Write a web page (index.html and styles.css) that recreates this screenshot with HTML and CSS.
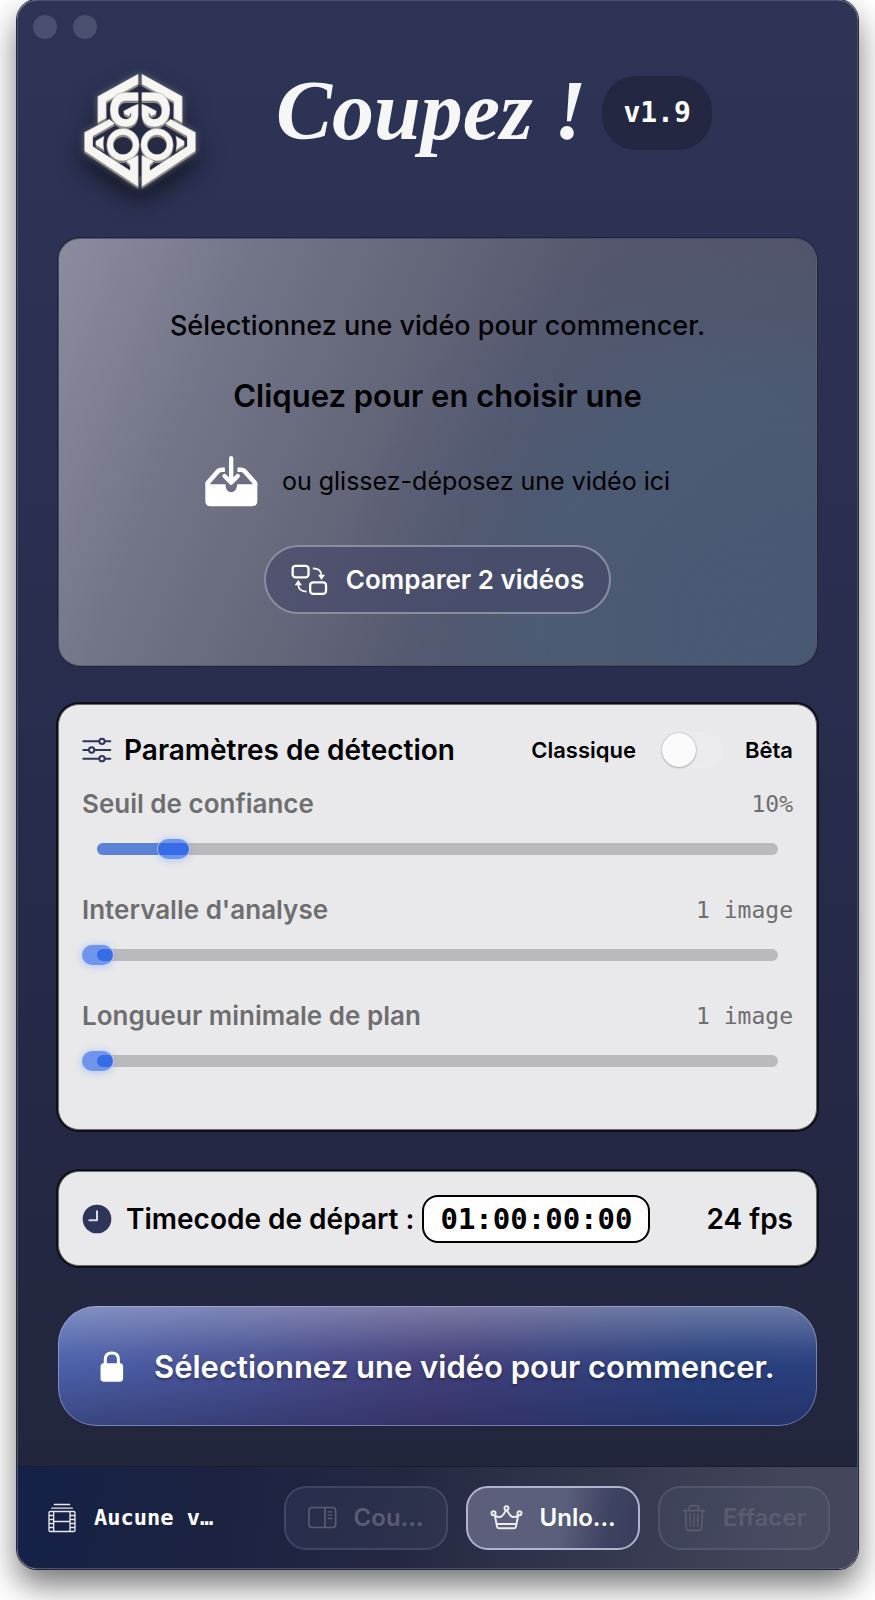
FILE: index.html
```html
<!DOCTYPE html>
<html lang="fr">

<head>
    <meta charset="UTF-8">
    <meta name="viewport" content="width=device-width, initial-scale=1.0">
    <title>Coupez !</title>
    <link rel="stylesheet" href="styles.css">
</head>

<body>
    <div class="window">
        <div class="titlebar">
            <span class="dot"></span>
            <span class="dot"></span>
        </div>

        <header class="header">
            <svg class="logo" viewBox="28 38 334 348" aria-hidden="true">
                <defs>
                    <g id="half">
                        <path d="M190 40 L68 108 V188 L94 174 V124 L190 72 Z" />
                        <path d="M190 96 H150 C120 96 105 122 105 148 C105 178 124 200 152 200 C178 200 190 182 190 160 V130 L172 138 L145 152 L148 162 L162 168 L168 158 C170 170 162 176 152 176 C138 176 130 166 130 150 C130 134 138 122 152 122 H190 Z" />
                        <path fill-rule="evenodd" d="M95 253 a49 49 0 1 0 98 0 a49 49 0 1 0 -98 0 Z M115 253 a29 29 0 1 1 58 0 a29 29 0 1 1 -58 0 Z" />
                        <path d="M103 176 L28 216 V272 L190 380 V284 L152 302 L165 314 V330 L54 258 V228 L120 190 Z" />
                        <path d="M62 242 L88 226 C84 242 84 254 88 270 L62 254 Z" />
                    </g>
                    <g id="mark">
                        <use href="#half" />
                        <use href="#half" transform="matrix(-1 0 0 1 390 0)" />
                    </g>
                </defs>
                <path d="M190 72 L94 124 V180 L54 226 V262 L190 352 L336 262 V226 L296 180 V124 Z" fill="#262a42" />
                <use href="#mark" y="6" fill="#8f8d89" />
                <use href="#mark" fill="#f6f5f2" stroke="#55545a" stroke-width="1" />
            </svg>
            <h1 class="title">Coupez !</h1>
            <span class="version">v1.9</span>
        </header>

        <main class="content">
            <section class="drop">
                <p class="drop-text">Sélectionnez une vidéo pour commencer.</p>
                <h2 class="drop-title">Cliquez pour en choisir une</h2>
                <div class="drop-hint">
                    <svg width="53" height="52" viewBox="0 0 160 156" fill="none" stroke="#fff" stroke-width="14" stroke-linecap="round" stroke-linejoin="round" aria-hidden="true">
                        <path fill="#fff" stroke="none" d="M1 88 H62 C62 104 70 112 79 112 C88 112 97 104 97 88 H158 V138 Q158 154 142 154 H17 Q1 154 1 138 Z" />
                        <path stroke-linecap="butt" d="M8 92 V84 L38 50 Q42 44 52 44 H60 M98 44 H107 Q117 44 121 50 L151 84 V92" />
                        <path stroke-width="13" d="M79 9 V82 M59 63 L79 83 L99 63" />
                    </svg>
                    <span>ou glissez-déposez une vidéo ici</span>
                </div>
                <button class="compare" type="button">
                    <svg width="37" height="32" viewBox="755 1031 112 96" fill="none" stroke="#fff" stroke-width="7" aria-hidden="true">
                        <rect x="760" y="1036" width="48" height="35" rx="9" />
                        <rect x="813" y="1086" width="48" height="35" rx="9" />
                        <path stroke-width="5" d="M821 1044 Q847 1044 847 1066 M802 1114 Q777 1114 777 1092" />
                        <path fill="#fff" stroke="none" d="M837 1063 H858 L847 1079 Z M766 1095 H788 L777 1079 Z" />
                    </svg>
                    Comparer 2 vidéos
                </button>
            </section>

            <section class="card settings">
                <div class="settings-head">
                    <svg width="30" height="26" viewBox="132 140 90 78" fill="#e9e9eb" stroke="#2e3559" stroke-width="6" stroke-linecap="round" aria-hidden="true">
                        <path d="M136 153 H217 M136 179 H217 M136 205 H217" />
                        <circle cx="192" cy="153" r="8" />
                        <circle cx="161" cy="179" r="8" />
                        <circle cx="192" cy="205" r="8" />
                    </svg>
                    <h2 class="card-title">Paramètres de détection</h2>
                    <div class="mode">
                        <span>Classique</span>
                        <input class="switch" type="checkbox" id="beta">
                        <label for="beta">Bêta</label>
                    </div>
                </div>

                <div class="setting">
                    <label for="seuil">Seuil de confiance</label>
                    <output class="value" for="seuil">10%</output>
                    <div class="slider">
                        <div class="track"><div class="fill" style="width: 13.5%"></div></div>
                        <input class="range" type="range" id="seuil" min="0" max="90" value="10">
                    </div>
                </div>
                <div class="setting">
                    <label for="intervalle">Intervalle d'analyse</label>
                    <output class="value" for="intervalle">1 image</output>
                    <div class="slider">
                        <div class="track"><div class="fill" style="width: 2.3%"></div></div>
                        <input class="range" type="range" id="intervalle" min="1" max="30" value="1">
                    </div>
                </div>
                <div class="setting">
                    <label for="longueur">Longueur minimale de plan</label>
                    <output class="value" for="longueur">1 image</output>
                    <div class="slider">
                        <div class="track"><div class="fill" style="width: 2.3%"></div></div>
                        <input class="range" type="range" id="longueur" min="1" max="60" value="1">
                    </div>
                </div>
            </section>

            <section class="card timecode">
                <svg width="30" height="30" viewBox="129 940 90 90" aria-hidden="true">
                    <circle cx="174" cy="985" r="43" fill="#2e3559" />
                    <path d="M174 962 V989 H151" fill="none" stroke="#dcdce4" stroke-width="6" stroke-linecap="round" stroke-linejoin="round" />
                </svg>
                <label class="card-title" for="tc">Timecode de départ :</label>
                <input class="tc-input" type="text" id="tc" value="01:00:00:00">
                <span class="fps">24 fps</span>
            </section>

            <button class="start" type="button">
                <svg width="24" height="31" viewBox="299 212 70 92" aria-hidden="true">
                    <rect x="300" y="248" width="67" height="55" rx="10" fill="#fff" />
                    <path d="M314 252 V237 Q314 218 333.500 218 Q353 218 353 237 V252" fill="none" stroke="#fff" stroke-width="9" />
                </svg>
                <span>Sélectionnez une vidéo pour commencer.</span>
            </button>
        </main>

        <footer class="footer">
            <svg width="28" height="30" viewBox="144 666 84 89" fill="none" stroke="#e8e8ee" stroke-width="4" aria-hidden="true">
                <path d="M163 670 H209 M155 681 H217" stroke-linecap="round" />
                <rect x="147" y="691" width="78" height="60" rx="4" />
                <path d="M161 691 V751 M210 691 V751 M161 721 H210 M147 703 H161 M147 715 H161 M147 727 H161 M147 739 H161 M210 703 H225 M210 715 H225 M210 727 H225 M210 739 H225" />
            </svg>
            <span class="status">Aucune v…</span>
            <div class="actions">
                <button class="action" type="button" disabled>
                    <svg width="29" height="23" viewBox="930 680 87 68" fill="none" stroke="currentColor" stroke-width="5" aria-hidden="true">
                        <rect x="933" y="684" width="80" height="60" rx="9" />
                        <path d="M981 684 V744" />
                        <path stroke-width="4" d="M989 697 H1003 M989 707 H1003 M989 717 H1003" />
                    </svg>
                    Cou...
                </button>
                <button class="action action-unlock" type="button">
                    <svg width="33" height="25" viewBox="167 677 98 75" fill="none" stroke="#ececec" stroke-width="6" stroke-linejoin="round" aria-hidden="true">
                        <circle cx="216" cy="687" r="6" />
                        <circle cx="177" cy="702" r="6" />
                        <circle cx="255" cy="702" r="6" />
                        <path d="M181 708 L188 743 Q189 747 194 747 H238 Q243 747 244 743 L251 708 M181 708 Q192 716 200 712 Q208 706 214 694 M251 708 Q240 716 232 712 Q224 706 218 694 M187 734 H245" />
                    </svg>
                    Unlo...
                </button>
                <button class="action" type="button" disabled>
                    <svg width="24" height="28" viewBox="742 670 72 85" fill="none" stroke="currentColor" stroke-width="5" stroke-linecap="round" aria-hidden="true">
                        <path d="M746 690 H810 M764 689 V682 Q764 675 771 675 H785 Q792 675 792 682 V689 M752 691 L755 744 Q756 750 762 750 H794 Q800 750 801 744 L804 691" />
                        <path stroke-width="4" d="M766 700 L767 738 M778 700 V738 M790 700 L789 738" />
                    </svg>
                    Effacer
                </button>
            </div>
        </footer>
    </div>
</body>

</html>
```
FILE: styles.css
```css
* {
    box-sizing: border-box;
    margin: 0;
    padding: 0;
}

body {
    background: #fff;
    font-family: Inter, "Liberation Sans", sans-serif;
    color: #000;
}

button,
input {
    font-family: inherit;
}

svg {
    flex: none;
}

.window {
    margin: 0 17px 32px;
    border: 1px solid #4b5070;
    border-radius: 20px;
    overflow: hidden;
    background: linear-gradient(#2e3456, #2b3052 30%, #262a49 60%, #22263d 92%) border-box;
    box-shadow: 0 0 0 1px #26283a, 0 16px 32px rgba(0, 0, 0, 0.55);
}

.titlebar {
    display: flex;
    gap: 16px;
    padding: 14px 15px 34px;
}

.dot {
    width: 24px;
    height: 24px;
    border-radius: 50%;
    background: #4c5070;
}

.header {
    display: flex;
    align-items: flex-start;
    height: 165px;
    padding-left: 66px;
}

.logo {
    width: 112px;
    height: 116px;
    overflow: visible;
    filter: drop-shadow(0 0 3px rgba(255, 255, 255, 0.3)) drop-shadow(0 12px 12px rgba(0, 0, 0, 0.6));
}

.title {
    margin: 0 16px 0 80px;
    font: italic bold 84px/76px "Liberation Serif", serif;
    color: #f6f6f6;
    white-space: nowrap;
}

.version {
    margin-top: 3px;
    padding: 0 21px;
    border-radius: 34px;
    background: #232741;
    color: #fff;
    font: bold 28px/74px "DejaVu Sans Mono", monospace;
}

.content {
    padding: 0 40px 40px;
}

.drop {
    display: flex;
    flex-direction: column;
    align-items: center;
    height: 428px;
    padding-top: 70px;
    border-radius: 22px;
    border: 1px solid rgba(70, 70, 84, 0.6);
    background:
        radial-gradient(circle at 92% 90%, rgba(72, 90, 116, 0.9), rgba(74, 92, 118, 0.7) 28%, rgba(74, 92, 118, 0) 52%),
        linear-gradient(112deg, #8c8c9f, #727488 22%, #636579 42%, #54566d 60%, #52546b 80%, #4c5068);
    box-shadow: 0 0 0 1px #20233c;
}

.drop-text {
    font-size: 27px;
    font-weight: 500;
    line-height: 34px;
}

.drop-title {
    margin-top: 33px;
    font-size: 31px;
    font-weight: 600;
    line-height: 40px;
}

.drop-hint {
    display: flex;
    align-items: center;
    gap: 24px;
    margin: 39px 0 38px;
    font-size: 25px;
    line-height: 52px;
}

.compare {
    display: flex;
    align-items: center;
    gap: 18px;
    height: 69px;
    padding: 0 25px;
    border: 2px solid #8a8da0;
    border-radius: 35px;
    background: rgba(66, 70, 104, 0.6);
    color: #fff;
    font-size: 26px;
    font-weight: 600;
}

.card {
    padding: 0 23px;
    border: 1px solid #6a6a6a;
    border-radius: 21px;
    background: #e9e9eb;
    box-shadow: 0 0 0 2px #0e1018;
}

.card-title {
    font-size: 28px;
    font-weight: 600;
}

.settings {
    margin-top: 38px;
    padding-bottom: 28px;
}

.settings-head {
    display: flex;
    align-items: center;
    gap: 12px;
    padding: 25px 0 13px;
    line-height: 40px;
}

.mode {
    display: flex;
    align-items: center;
    margin-left: auto;
    font-size: 22px;
    font-weight: 600;
}

.switch {
    appearance: none;
    width: 62px;
    height: 36px;
    margin: 0 22px 0 25px;
    border: 1px solid #ededef;
    border-radius: 18px;
    background: #ebebed;
}

.switch::before {
    content: "";
    display: block;
    width: 34px;
    height: 34px;
    border-radius: 50%;
    background: #fafafa;
    box-shadow: 0 0 2px rgba(0, 0, 0, 0.3), 0 1px 2px rgba(0, 0, 0, 0.2);
}

.switch:checked::before {
    margin-left: 26px;
}

.setting {
    display: grid;
    grid-template-columns: 1fr auto;
    align-items: center;
    height: 106px;
    padding-bottom: 16px;
    color: #6e6e70;
    font-size: 26px;
    font-weight: 600;
    line-height: 42px;
}

.value {
    font: 23px/42px "DejaVu Sans Mono", monospace;
}

.slider {
    grid-column: 1 / 3;
    display: grid;
    align-items: center;
    height: 48px;
}

.track {
    grid-area: 1 / 1;
    height: 12px;
    margin: 0 15px;
    border-radius: 6px;
    background: #bababc;
}

.fill {
    height: 12px;
    border-radius: 6px;
    background: #5b82d6;
}

.range {
    grid-area: 1 / 1;
    appearance: none;
    width: 100%;
    background: none;
}

.range::-webkit-slider-thumb {
    appearance: none;
    width: 31px;
    height: 20px;
    border-radius: 10px;
    background: rgba(30, 94, 238, 0.6);
    box-shadow: 0 0 0 1px rgba(200, 216, 250, 0.6), 0 1px 8px rgba(80, 130, 240, 0.4);
}

.timecode {
    display: flex;
    align-items: center;
    height: 95px;
    margin-top: 41px;
}

.timecode .card-title {
    margin: 0 8px 0 14px;
    white-space: nowrap;
}

.tc-input {
    width: 228px;
    height: 48px;
    border: 2px solid #000;
    border-radius: 16px;
    background: #fff;
    color: #000;
    font: bold 29px "DejaVu Sans Mono", monospace;
    text-align: center;
}

.fps {
    margin-left: auto;
    font-size: 28px;
    font-weight: 600;
    white-space: nowrap;
}

.start {
    display: flex;
    align-items: center;
    gap: 30px;
    width: 100%;
    height: 120px;
    margin-top: 40px;
    padding-left: 41px;
    border: 1px solid rgba(190, 190, 240, 0.5);
    border-radius: 38px;
    background:
        linear-gradient(rgba(255, 255, 255, 0.3), rgba(255, 255, 255, 0.05) 38%, rgba(40, 40, 90, 0) 50%, rgba(30, 32, 70, 0.4)) border-box,
        linear-gradient(100deg, #4c62ac, #44407c 50%, #27407e 85%, #2b3f80) border-box;
    color: #fff;
    font-size: 31px;
    font-weight: 600;
    white-space: nowrap;
    text-shadow: 0 2px 3px rgba(0, 0, 0, 0.35);
}

.footer {
    display: flex;
    align-items: center;
    height: 102px;
    padding: 0 27px 0 30px;
    border-top: 1px solid #191c30;
    background: linear-gradient(100deg, #152148, #1c2340 25%, #232742 45%, #31354c 66%, #44475b 92%);
}

.status {
    margin-left: 18px;
    color: #fff;
    font: bold 22px "DejaVu Sans Mono", monospace;
    white-space: nowrap;
}

.actions {
    display: flex;
    gap: 18px;
    margin-left: auto;
}

.action {
    display: flex;
    align-items: center;
    justify-content: center;
    gap: 17px;
    min-width: 163px;
    height: 64px;
    padding: 0 22px;
    border: 2px solid rgba(120, 124, 156, 0.3);
    border-radius: 22px;
    background: rgba(110, 114, 150, 0.12);
    color: #5a5d72;
    font-size: 24px;
    font-weight: 600;
}

.action-unlock {
    border-color: #b0b4d0;
    background: linear-gradient(100deg, #5d5f7b, #5a5f7b 55%, #3f4362 80%, #393d5b) border-box;
    color: #fff;
}
```
